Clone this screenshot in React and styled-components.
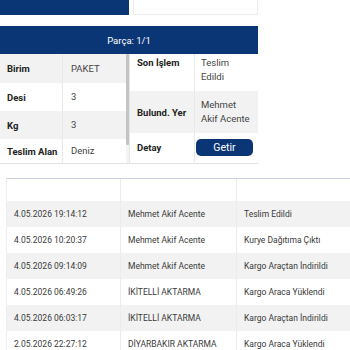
import React from "react";
import styled, { createGlobalStyle } from "styled-components";

const Global = createGlobalStyle`
  body {
    margin: 0;
    background: #fff;
    font-family: Roboto, "Liberation Sans", sans-serif;
    color: #333;
  }
`;

const Page = styled.div`
  width: 350px;
  height: 350px;
  overflow: hidden;
`;

const TopRow = styled.div`
  display: flex;
  gap: 4px;
  width: 258px;
  height: 15px;
`;

const BlueBar = styled.div`
  width: 129px;
  background: #0b3675;
`;

const BlankBox = styled.div`
  flex: 1;
  border: 1px solid #ececec;
  border-top: none;
`;

const Card = styled.div`
  width: 258px;
  margin-top: 11px;
  border-bottom: 1px solid #e2e2e2;
`;

const CardHead = styled.div`
  height: 28px;
  background: #0b3675;
  color: #fff;
  font-size: 9.5px;
  display: flex;
  align-items: center;
  justify-content: center;
`;

const Panels = styled.div`
  display: flex;
  height: 109px;
`;

const LeftTable = styled.div`
  width: 126px;
  display: flex;
  flex-direction: column;
`;

const Track = styled.div`
  width: 3px;
  background: #f4f4f4;
  display: flex;
  flex-direction: column;
`;

const Thumb = styled.div`
  height: 91px;
  background: #c4c4c4;
  border-radius: 1px;
`;

const RightTable = styled.div`
  flex: 1;
  display: flex;
  flex-direction: column;
  border-left: 1px solid #e6e6e6;
`;

const Row = styled.div`
  display: grid;
  grid-template-columns: ${p => p.$cols};
  height: ${p => p.$h}px;
  background: ${p => (p.$alt ? "#f2f2f2" : "#fff")};
  flex-shrink: 0;
`;

const Label = styled.div`
  font-weight: 700;
  font-size: 9.5px;
  color: #222;
  padding: ${p => (p.$top ? "3px 0 0 7px" : "0 0 0 7px")};
  display: flex;
  align-items: ${p => (p.$top ? "flex-start" : "center")};
  border-right: 1px solid #e9e9e9;
`;

const Value = styled.div`
  font-size: 9.5px;
  color: #444;
  line-height: 14px;
  padding: ${p => (p.$top ? "2px" : "0")} 0 0 ${p => p.$pad || 8}px;
  display: flex;
  align-items: ${p => (p.$top ? "flex-start" : "center")};
`;

const ButtonCell = styled.div`
  display: flex;
  align-items: center;
  padding-left: 1px;
`;

const Button = styled.button`
  width: 57px;
  height: 17px;
  border: none;
  border-radius: 5px;
  background: #0b3675;
  color: #fff;
  font-family: Roboto, "Liberation Sans", sans-serif;
  font-size: 10.5px;
  padding: 0;
`;

const History = styled.div`
  margin: 14px 0 0 6px;
  border-top: 1px solid #c9d2de;
  border-left: 1px solid #eeeeee;
`;

const HRow = styled.div`
  display: grid;
  grid-template-columns: 114px 116px 120px;
  height: ${p => p.$h || 26}px;
  background: ${p => (p.$alt ? "#f2f2f2" : "#fff")};
`;

const Cell = styled.div`
  font-size: 8.5px;
  color: #3a3a3a;
  padding-left: 7px;
  display: flex;
  align-items: center;
  border-right: 1px solid #ececec;
  white-space: nowrap;
`;

const left = [
  ["Birim", "PAKET", 29],
  ["Desi", "3", 28],
  ["Kg", "3", 28],
  ["Teslim Alan", "Deniz", 24],
];

const history = [
  ["4.05.2026 19:14:12", "Mehmet Akif Acente", "Teslim Edildi"],
  ["4.05.2026 10:20:37", "Mehmet Akif Acente", "Kurye Dağıtıma Çıktı"],
  ["4.05.2026 09:14:09", "Mehmet Akif Acente", "Kargo Araçtan İndirildi"],
  ["4.05.2026 06:49:26", "İKİTELLİ AKTARMA", "Kargo Araca Yüklendi"],
  ["4.05.2026 06:03:17", "İKİTELLİ AKTARMA", "Kargo Araçtan İndirildi"],
  ["2.05.2026 22:27:12", "DİYARBAKIR AKTARMA", "Kargo Araca Yüklendi"],
];

export default function App() {
  return (
    <Page>
      <Global />
      <TopRow>
        <BlueBar />
        <BlankBox />
      </TopRow>
      <Card>
        <CardHead>Parça: 1/1</CardHead>
        <Panels>
          <LeftTable>
            {left.map(([l, v, h], i) => (
              <Row key={l} $cols="63px 1fr" $h={h} $alt={i % 2 === 0}>
                <Label>{l}</Label>
                <Value>{v}</Value>
              </Row>
            ))}
          </LeftTable>
          <Track>
            <Thumb />
          </Track>
          <RightTable>
            <Row $cols="65px 1fr" $h={37}>
              <Label $top>Son İşlem</Label>
              <Value $top $pad={6}>Teslim<br />Edildi</Value>
            </Row>
            <Row $cols="65px 1fr" $h={42} $alt>
              <Label>Bulund. Yer</Label>
              <Value $pad={6}>Mehmet<br />Akif Acente</Value>
            </Row>
            <Row $cols="65px 1fr" $h={29}>
              <Label>Detay</Label>
              <ButtonCell>
                <Button>Getir</Button>
              </ButtonCell>
            </Row>
          </RightTable>
        </Panels>
      </Card>
      <History>
        <HRow $h={22}>
          <Cell />
          <Cell />
          <Cell />
        </HRow>
        {history.map((r, i) => (
          <HRow key={i} $alt={i % 2 === 0}>
            {r.map((c, j) => (
              <Cell key={j}>{c}</Cell>
            ))}
          </HRow>
        ))}
      </History>
    </Page>
  );
}
